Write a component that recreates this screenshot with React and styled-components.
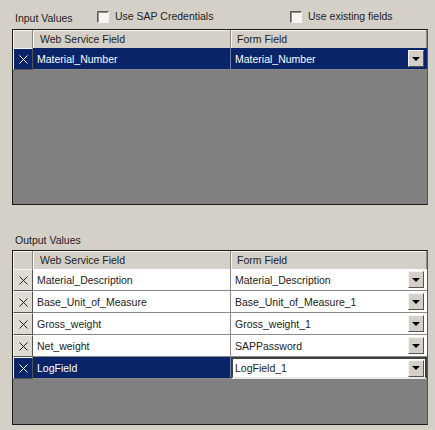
import React from "react";
import styled, { createGlobalStyle } from "styled-components";

const GlobalStyle = createGlobalStyle`
  html, body {
    margin: 0;
    padding: 0;
    background: #d4d0c8;
  }
`;

const Page = styled.div`
  width: 435px;
  height: 430px;
  overflow: hidden;
  box-sizing: border-box;
  padding: 9px 7px 0 12px;
  background: #d4d0c8;
  font-family: "Liberation Sans", Arial, sans-serif;
  font-size: 10.5px;
  color: #222;
`;

const TopBar = styled.div`
  display: flex;
  align-items: flex-start;
  height: 20px;
`;

const InputLabel = styled.div`
  width: 85px;
  padding: 3px 0 0 3px;
  box-sizing: border-box;
  line-height: 13px;
`;

const OutputLabel = styled.div`
  height: 45px;
  padding: 29px 0 0 3px;
  box-sizing: border-box;
  line-height: 13px;
`;

const Check = styled.label`
  display: flex;
  align-items: center;
  gap: 6px;
  width: ${(p) => p.$width || "auto"};
  padding-top: 1px;
  line-height: 13px;
`;

const CheckBox = styled.span`
  width: 12px;
  height: 12px;
  box-sizing: border-box;
  background: #f6f5f2;
  border: 1px solid;
  border-color: #5f5d58 #f4f3f0 #f4f3f0 #5f5d58;
  box-shadow: inset 1px 1px 0 #8f8d88;
`;

const Grid = styled.div`
  width: 416px;
  height: ${(p) => p.$height}px;
  box-sizing: border-box;
  border: 1px solid #1a1a1a;
  border-right-color: #555;
  background: #808080;
`;

const Row = styled.div`
  display: grid;
  grid-template-columns: 20px 198px 1fr;
  height: ${(p) => p.$height || 22}px;
  box-sizing: border-box;
`;

const HeaderCell = styled.div`
  background: #d4d0c8;
  border-right: 1px solid #8d8b85;
  box-shadow: inset 1px 1px 0 #f5f4f1;
  padding: 2px 0 0 ${(p) => p.$indent || 7}px;
  line-height: 14px;
`;

const RowButton = styled.div`
  display: flex;
  align-items: center;
  justify-content: center;
  background: ${(p) => (p.$active ? "#0a246a" : "#dedbd5")};
  border: 1px solid;
  border-color: #f5f4f1 #55534f #55534f #f5f4f1;
  box-sizing: border-box;
  color: ${(p) => (p.$active ? "#fff" : "#222")};
`;

const Cell = styled.div`
  display: flex;
  align-items: center;
  box-sizing: border-box;
  padding-left: 4px;
  background: ${(p) => (p.$active ? "#0a246a" : "#fff")};
  color: ${(p) => (p.$active ? "#fff" : "#222")};
  border-right: 1px solid ${(p) => (p.$active ? "#6c7aa0" : "#8a8a8a")};
  border-bottom: 1px solid #8a8a8a;
`;

const ComboCell = styled(Cell)`
  justify-content: space-between;
  padding-right: 3px;
  border-right: none;
  ${(p) =>
    p.$editing &&
    `
    background: #fff;
    color: #222;
    border: 2px solid #3f3f3f;
    border-bottom-color: #e8e8e8;
    padding-left: 2px;
    padding-right: 1px;
  `}
`;

const DropButton = styled.div`
  width: 16px;
  height: 17px;
  display: flex;
  align-items: center;
  justify-content: center;
  box-sizing: border-box;
  background: #d4d0c8;
  border: 1px solid;
  border-color: #f5f4f1 #55534f #55534f #f5f4f1;
`;

const XMark = () => (
  <svg width="9" height="9" viewBox="0 0 9 9">
    <path d="M0.5 0.5L8.5 8.5M8.5 0.5L0.5 8.5" stroke="currentColor" strokeWidth="1" fill="none" />
  </svg>
);

const Arrow = () => (
  <svg width="8" height="4" viewBox="0 0 8 4">
    <path d="M0 0H8L4 4Z" fill="#000" />
  </svg>
);

const GridHeader = () => (
  <Row $height={18}>
    <HeaderCell />
    <HeaderCell>Web Service Field</HeaderCell>
    <HeaderCell $indent={6}>Form Field</HeaderCell>
  </Row>
);

const GridRow = ({ field, form, active, editing }) => (
  <Row>
    <RowButton $active={active}>
      <XMark />
    </RowButton>
    <Cell $active={active}>{field}</Cell>
    <ComboCell $active={active} $editing={editing}>
      {form}
      <DropButton>
        <Arrow />
      </DropButton>
    </ComboCell>
  </Row>
);

const outputRows = [
  { field: "Material_Description", form: "Material_Description" },
  { field: "Base_Unit_of_Measure", form: "Base_Unit_of_Measure_1" },
  { field: "Gross_weight", form: "Gross_weight_1" },
  { field: "Net_weight", form: "SAPPassword" },
  { field: "LogField", form: "LogField_1", active: true, editing: true },
];

const App = () => (
  <>
    <GlobalStyle />
    <Page>
      <TopBar>
        <InputLabel>Input Values</InputLabel>
        <Check $width="193px">
          <CheckBox />
          Use SAP Credentials
        </Check>
        <Check>
          <CheckBox />
          Use existing fields
        </Check>
      </TopBar>
      <Grid $height={176}>
        <GridHeader />
        <GridRow field="Material_Number" form="Material_Number" active />
      </Grid>
      <OutputLabel>Output Values</OutputLabel>
      <Grid $height={175}>
        <GridHeader />
        {outputRows.map((row) => (
          <GridRow key={row.field} {...row} />
        ))}
      </Grid>
    </Page>
  </>
);

export default App;
